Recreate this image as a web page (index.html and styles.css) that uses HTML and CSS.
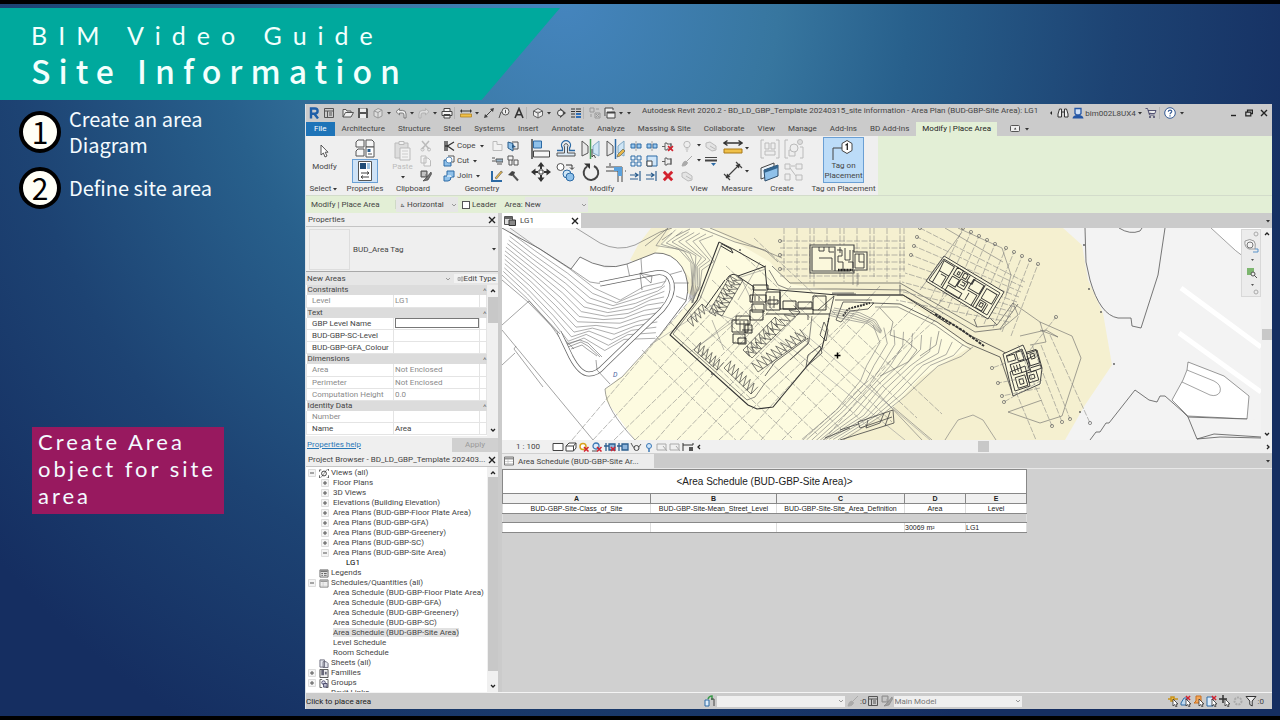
FILE: index.html
```html
<!DOCTYPE html>
<html lang="en">
<head>
    <meta charset="UTF-8">
    <meta name="viewport" content="width=device-width, initial-scale=1.0">
    <title>BIM Video Guide - Site Information</title>
    <link rel="stylesheet" href="styles.css">
</head>
<body>
    <!-- Icon sprite -->
    <svg class="sprite" aria-hidden="true">
        <symbol id="i-caret" viewBox="0 0 8 8"><path d="M2 3h4L4 5.500z" fill="#333"/></symbol>
        <symbol id="i-chev" viewBox="0 0 8 8"><path d="M2 3l2 2 2-2" fill="none" stroke="#999"/></symbol>
        <symbol id="i-up" viewBox="0 0 8 8"><path d="M2 5l2-2 2 2" fill="none" stroke="#222" stroke-width="1.300"/></symbol>
        <symbol id="i-down" viewBox="0 0 8 8"><path d="M2 3l2 2 2-2" fill="none" stroke="#222" stroke-width="1.300"/></symbol>
        <symbol id="i-left" viewBox="0 0 8 8"><path d="M5 2L3 4l2 2" fill="none" stroke="#222" stroke-width="1.300"/></symbol>
        <symbol id="i-right" viewBox="0 0 8 8"><path d="M3 2l2 2-2 2" fill="none" stroke="#222" stroke-width="1.300"/></symbol>
        <symbol id="i-back" viewBox="0 0 8 8"><path d="M5 2v4L3 4z" fill="#222"/></symbol>
        <symbol id="i-x" viewBox="0 0 8 8"><path d="M1 1l6 6M7 1L1 7" stroke="#222" stroke-width="1.400"/></symbol>
        <symbol id="i-redx" viewBox="0 0 10 10"><path d="M1.500 1.500l7 7M8.500 1.500l-7 7" stroke="#d3232f" stroke-width="2.400"/></symbol>
        <symbol id="i-revit" viewBox="0 0 12 12"><path d="M3 11.500V1.500h4a2.600 2.600 0 0 1 0 5.200H4M6.500 7L10 11.500" fill="none" stroke="#1f5fa8" stroke-width="2.400"/></symbol>
        <symbol id="i-home" viewBox="0 0 12 12"><path d="M1.500 1.500h9v9h-9zM1.500 4h9M4.500 4v6.500M6 6h3M6 8h3" fill="none" stroke="#555"/></symbol>
        <symbol id="i-open" viewBox="0 0 12 12"><path d="M1 10V2.500h3l1 1.500h4v1.500M1 10l2.500-4.500H11.500L9 10z" fill="#eee" stroke="#555"/></symbol>
        <symbol id="i-save" viewBox="0 0 12 12"><path d="M1 1h9l1 1v9H1z" fill="#555"/><path d="M3 1.500h6v3.500H3zM3 7h6v4H3z" fill="#eee"/></symbol>
        <symbol id="i-sync" viewBox="0 0 12 12"><path d="M2 4l4-2.500L10 3v6l-4 2-4-2zM2 4l4 1.500V11M6 5.500L10 3" fill="#ddd" stroke="#999"/></symbol>
        <symbol id="i-undo" viewBox="0 0 12 12"><path d="M4.500 1.500L1 4.700l3.500 3.200V6h2.700q1.800 0 1.800 2v3h2V7q0-3.600-3.500-3.600h-3z" fill="#eee" stroke="#666" stroke-width=".8"/></symbol>
        <symbol id="i-redo" viewBox="0 0 12 12"><path d="M7.500 1.500L11 4.700 7.500 7.900V6H4.800Q3 6 3 8v3H1V7q0-3.600 3.500-3.600h3z" fill="#ddd" stroke="#aaa" stroke-width=".8"/></symbol>
        <symbol id="i-print" viewBox="0 0 12 12"><path d="M3 4.500V1.500h6v3M1 4.500h10v4H1zM3 7.500h6v3.500H3z" fill="#f4f4f4" stroke="#444"/></symbol>
        <symbol id="i-rule" viewBox="0 0 12 12"><path d="M0 4h12M1.500 2.500v3M10.500 2.500v3" stroke="#333"/><path d="M.5 7h11v3H.5z" fill="#f0c14a" stroke="#a97916" stroke-width=".7"/></symbol>
        <symbol id="i-dim" viewBox="0 0 12 12"><path d="M2 10L10 2" stroke="#444"/><path d="M1 11l1-4 3 3zM11 1l-1 4-3-3z" fill="#444"/></symbol>
        <symbol id="i-tag" viewBox="0 0 12 12"><path d="M1 11l2-6h3" fill="none" stroke="#555"/><circle cx="7.500" cy="4.500" r="3.500" fill="#eee" stroke="#555"/><path d="M7.500 2.800v3.400" stroke="#555"/></symbol>
        <symbol id="i-letter" viewBox="0 0 12 12"><path d="M2 11L6 1.500 10 11M3.500 7.800h5" fill="none" stroke="#333" stroke-width="1.600"/></symbol>
        <symbol id="i-cube" viewBox="0 0 12 12"><path d="M1.500 4L6 1.500 10.500 4v4.500L6 11 1.500 8.500zM1.500 4L6 6.200 10.500 4M6 6.200V11" fill="#eee" stroke="#555" stroke-width=".9"/></symbol>
        <symbol id="i-sect" viewBox="0 0 12 12"><path d="M5 1l6 5-6 5z" fill="#444"/><circle cx="5.500" cy="6" r="3" fill="#eee" stroke="#444"/></symbol>
        <symbol id="i-thin" viewBox="0 0 12 12"><path d="M1 2h4M1 4.500h4M1 7h4M1 10h4" stroke="#333"/><path d="M6 2h5M6 4.500h5" stroke="#333"/><path d="M6 7h5M6 10h5" stroke="#2f6db5" stroke-width="2"/></symbol>
        <symbol id="i-closew" viewBox="0 0 12 12"><path d="M1 1h4v4H1zM6 6h5v5H6zM7 2h3M2 7v3" fill="none" stroke="#999"/><path d="M7 7l3 3m0-3l-3 3" stroke="#999"/></symbol>
        <symbol id="i-switch" viewBox="0 0 12 12"><path d="M1 9V1h8v2M3 5h8v6H3z" fill="#eee" stroke="#444"/><path d="M3 5h8v1.500H3z" fill="#444"/></symbol>
        <symbol id="i-binoc" viewBox="0 0 12 12"><path d="M1 7l1.500-5h2v8H1zM11 7L9.500 2h-2v8H11zM4.500 5h3" fill="#eee" stroke="#333"/></symbol>
        <symbol id="i-user" viewBox="0 0 12 12"><path d="M3 1.500h6v5L7.500 8h-3L3 6.500z" fill="#cfe0f7" stroke="#2456a5" stroke-width="1.300"/><path d="M.5 11.500c.5-3 3-3.500 5.500-3.500s5 .5 5.500 3.500z" fill="#2456a5"/></symbol>
        <symbol id="i-cart" viewBox="0 0 12 12"><path d="M.5 1.500h2l2 6.500h5M3 3.500h8L9.800 6.500H4" fill="#eee" stroke="#446" stroke-width=".9"/><circle cx="5" cy="10" r="1" fill="#446"/><circle cx="9" cy="10" r="1" fill="#446"/></symbol>
        <symbol id="i-help" viewBox="0 0 12 12"><circle cx="6" cy="6" r="5.300" fill="#fff" stroke="#345a94"/><path d="M4.300 4.700C4.500 2.500 8 2.700 7.700 4.700 7.500 5.800 6 5.800 6 7.300M6 8.300v1.300" fill="none" stroke="#345a94" stroke-width="1.200"/></symbol>
        <symbol id="i-min" viewBox="0 0 8 8"><path d="M1 6.500h5" stroke="#222" stroke-width="1.400"/></symbol>
        <symbol id="i-rest" viewBox="0 0 8 8"><path d="M2.500 3V1.200h5v3.500H6M.8 3.200h5v3.600h-5z" fill="none" stroke="#222" stroke-width="1.200"/></symbol>
        <symbol id="i-panel" viewBox="0 0 12 8"><rect x=".5" y=".5" width="9" height="6" rx="1" fill="#eee" stroke="#555"/><path d="M4 4.500l1.200-2 1.200 2z" fill="#333"/></symbol>

        <symbol id="i-cursor" viewBox="0 0 20 20"><path d="M7 4v10l2.400-2L11 16l2-1-1.800-3.800H14z" fill="#fff" stroke="#444" stroke-width=".9"/></symbol>
        <symbol id="i-types" viewBox="0 0 20 20"><path d="M3 2h6v7H1V4zM11 2h6l2 2v5h-8zM3 11h6v7H1v-5z" fill="#f6f6f6" stroke="#555"/><path d="M11 9h8v10h-8z" fill="#fff" stroke="#555"/><path d="M12.500 11h3v3h-3z" fill="#2b5d8c"/><path d="M13 16h4" stroke="#555"/></symbol>
        <symbol id="i-props" viewBox="0 0 20 20"><path d="M3.500.5h13v19h-13z" fill="#fff" stroke="#555"/><path d="M5 2h6v6H5z" fill="#1f4c77"/><path d="M12 2h3v6h-3z" fill="#9cc3e2"/><path d="M6 12h8M12 10.500l2 1.500-2 1.500M14 16H6M8 14.500L6 16l2 1.500" fill="none" stroke="#444"/></symbol>
        <symbol id="i-paste" viewBox="0 0 20 20"><path d="M2 2h13v15H2z" fill="#ddd" stroke="#bbb"/><path d="M6 .5h5v3H6zM7 7h10v12H7z" fill="#f2f2f2" stroke="#bbb"/><path d="M9 10h6M9 13h6M9 16h6" stroke="#ccc"/></symbol>
        <symbol id="i-cutg" viewBox="0 0 12 12"><path d="M2 1l7 8M9 1L2 9" stroke="#bbb" stroke-width="1.500"/><circle cx="2.500" cy="9.500" r="1.500" fill="none" stroke="#bbb"/><circle cx="9" cy="9.500" r="1.500" fill="none" stroke="#bbb"/></symbol>
        <symbol id="i-copyg" viewBox="0 0 12 12"><path d="M1 1h5v7H1zM4 3h4l2.500 2.500V11H4z" fill="#f4f4f4" stroke="#bbb"/></symbol>
        <symbol id="i-match" viewBox="0 0 12 12"><path d="M1 1h6v6H1z" fill="#999" stroke="#555"/><path d="M2 3h4M2 5h3" stroke="#eee"/><path d="M11 2L6 8l-3 3 5-1 3.500-6z" fill="#777" stroke="#333" stroke-width=".6"/></symbol>
        <symbol id="i-cope" viewBox="0 0 12 12"><path d="M2 1v10M4 1v10M11 2L4.500 6 11 10.500M2 6h3" fill="none" stroke="#333" stroke-width="1.300"/></symbol>
        <symbol id="i-cut" viewBox="0 0 12 12"><path d="M5 1h6v6H8" fill="#fff" stroke="#555"/><path d="M1 5h4q0 3 3 3v3H1z" fill="#8fc1ea" stroke="#2c6aa5"/><circle cx="6" cy="5" r="3" fill="#fff" stroke="#2c6aa5" stroke-width=".7"/></symbol>
        <symbol id="i-join" viewBox="0 0 12 12"><path d="M4 1h7v6H8q0 4-3 4H1V6h3z" fill="#8fc1ea" stroke="#2c6aa5"/><path d="M4 6h4v1" fill="none" stroke="#fff"/></symbol>
        <symbol id="i-wallj" viewBox="0 0 12 12"><path d="M2 1.500h4v3h5v6H2z" fill="#f2f2f2" stroke="#bbb"/></symbol>
        <symbol id="i-face" viewBox="0 0 12 12"><path d="M1 2l5 1.500V11L1 8z" fill="#8fc1ea" stroke="#2c5c88"/><path d="M5 2h6v7H6" fill="none" stroke="#555"/><path d="M5 4l4 3-4 1z" fill="#2c5c88"/></symbol>
        <symbol id="i-beam" viewBox="0 0 12 12"><path d="M1 3h3M1 6h3M5 4h7v3H5z" fill="#9db8cc" stroke="#555"/><path d="M6 9h5" stroke="#555"/></symbol>
        <symbol id="i-uncut" viewBox="0 0 12 12"><path d="M1 1h5v4H1zM2 5v5h3V5M7 5h4v5H7z" fill="#f4f4f4" stroke="#555"/></symbol>
        <symbol id="i-paint" viewBox="0 0 12 12"><path d="M1 1v10h10" fill="none" stroke="#2c6aa5" stroke-width="2"/><path d="M4 8l6-7 1.500 1L5.500 9z" fill="#e8b84b" stroke="#555" stroke-width=".6"/></symbol>
        <symbol id="i-demo" viewBox="0 0 12 12"><path d="M1 5l4-4 3 1-1 3-2 1z" fill="#444"/><path d="M6 5l5 5.500" stroke="#555" stroke-width="2"/></symbol>
        <symbol id="i-align" viewBox="0 0 20 20"><path d="M1 0v20" stroke="#444" stroke-width="1.500"/><path d="M2.500 2h8v7h-8z" fill="#8fc1ea" stroke="#2c6aa5"/><path d="M2.500 12h16v6h-16z" fill="#f6f6f6" stroke="#444"/></symbol>
        <symbol id="i-offset" viewBox="0 0 20 20"><path d="M1 11.500h5.500V9a4.500 4.500 0 1 1 7 0v2.500H19" fill="none" stroke="#2c6aa5" stroke-width="1.300"/><path d="M1 17h18V14H11.500V8a2 2 0 1 0-3 0v6H1z" fill="#dbe9f5" stroke="#555"/></symbol>
        <symbol id="i-mirp" viewBox="0 0 20 20"><path d="M1 2v15l6-3V7z" fill="#e8e8e8" stroke="#555"/><path d="M18 2v15l-6-3V7z" fill="#cfe5f5" stroke="#7fa8c4"/><path d="M9.500 0v20" stroke="#4ba15a" stroke-width="1.500"/><path d="M11 10v8l2-2 1.500 3" fill="none" stroke="#444"/></symbol>
        <symbol id="i-mird" viewBox="0 0 20 20"><path d="M1 2v15l6-3V7z" fill="#e8e8e8" stroke="#555"/><path d="M18 2v15l-6-3V7z" fill="#cfe5f5" stroke="#7fa8c4"/><path d="M9.500 0v20" stroke="#2c6aa5" stroke-width="1.500"/><path d="M11 18l1-3 5-5 2 2-5 5z" fill="#e8b84b" stroke="#665" stroke-width=".7"/></symbol>
        <symbol id="i-move" viewBox="0 0 20 20"><path d="M10 0l3.500 4.500h-7zM10 20l3.500-4.500h-7zM0 10l4.500-3.500v7zM20 10l-4.500-3.500v7z" fill="#333"/><path d="M10 4v3M10 13v3M4 10h3M13 10h3" stroke="#333" stroke-width="2"/><path d="M8 8h4v4H8z" fill="#fff" stroke="#333"/></symbol>
        <symbol id="i-copy" viewBox="0 0 20 20"><circle cx="4.500" cy="5" r="3.500" fill="#fff" stroke="#555"/><path d="M10 3h6v4M14 5.500l2 2 2-2" fill="none" stroke="#333"/><circle cx="11" cy="12" r="4" fill="#cfe5f5" stroke="#2c6aa5"/><circle cx="14" cy="15" r="4" fill="#8fc1ea" stroke="#2c6aa5"/></symbol>
        <symbol id="i-rot" viewBox="0 0 20 20"><path d="M6 4.500A7.300 7.300 0 1 0 13 4" fill="none" stroke="#444" stroke-width="2"/><path d="M3 1.500h6v5.500z" fill="#333"/></symbol>
        <symbol id="i-trim" viewBox="0 0 20 20"><path d="M0 5h16v15M0 9h12v11" fill="none" stroke="#444"/><path d="M8 5h8v9h-4V9H8z" fill="#5aa1dc"/><path d="M4 1v3M19 9h1" stroke="#444"/></symbol>
        <symbol id="i-split" viewBox="0 0 12 12"><path d="M1 4h4v4H1zM7 4h4v4H7z" fill="#9ccaf0" stroke="#2c6aa5"/><path d="M6 1v10" stroke="#777" stroke-width=".6"/></symbol>
        <symbol id="i-array" viewBox="0 0 12 12"><path d="M1 1h4v4H1zM7 1h4v4H7zM1 7h4v4H1zM7 7h4v4H7z" fill="#e8f2fb" stroke="#2c6aa5"/></symbol>
        <symbol id="i-scale" viewBox="0 0 12 12"><path d="M1 1h10v10H1z" fill="#cfe5f8" stroke="#2c6aa5"/><path d="M1 6h5v5H1z" fill="#fff" stroke="#444"/></symbol>
        <symbol id="i-ext" viewBox="0 0 12 12"><path d="M0 5h8M0 9h8M5 3l3 2-3 2M10 1v10" fill="none" stroke="#2d5f8f" stroke-width="1.200"/></symbol>
        <symbol id="i-pin" viewBox="0 0 12 12"><path d="M3 3h2v1h4v5H5v1H3zM0 6.500h3M9 3v7" fill="#eee" stroke="#555" stroke-width=".9"/></symbol>
        <symbol id="i-bulb" viewBox="0 0 12 12"><circle cx="6" cy="4.500" r="3.200" fill="#eee" stroke="#bbb"/><path d="M4.500 9h3M5 11h2" stroke="#bbb"/></symbol>
        <symbol id="i-brush" viewBox="0 0 12 12"><path d="M11 1L5 7M5 6q-3 0-4 5 5 0 5.500-3.500z" fill="#aaa" stroke="#aaa"/></symbol>
        <symbol id="i-boxg" viewBox="0 0 12 12"><path d="M1 3l4-1 6 4v4l-4 1-6-4zM5 6l5 3" fill="#e4e4e4" stroke="#bbb"/></symbol>
        <symbol id="i-lw" viewBox="0 0 12 12"><path d="M0 2.500h12" stroke="#444"/><path d="M0 5.500h12" stroke="#444" stroke-width="2"/><path d="M6 8h5L8.500 11z" fill="#2c6aa5"/></symbol>
        <symbol id="i-meas" viewBox="0 0 20 20"><path d="M1 5h18M4.500 2.500L1 5l3.500 2.500M15.500 2.500L19 5l-3.500 2.500" fill="none" stroke="#333" stroke-width="1.400"/><path d="M1 11h18v4H1z" fill="#f0c14a" stroke="#a97916"/></symbol>
        <symbol id="i-adim" viewBox="0 0 20 20"><path d="M3 17L17 3M1 13l6 6M13 1l6 6" fill="none" stroke="#444" stroke-width="1.200"/><path d="M3 17l1-4.500L7.500 16zM17 3l-1 4.500L12.500 4z" fill="#333"/></symbol>
        <symbol id="i-asm" viewBox="0 0 20 20"><path d="M4 1H1v18h3M16 1h3v18h-3" fill="none" stroke="#bbb"/><path d="M5 4h4v6H5zM11 4h4v6h-4zM5 12h10v4H5z" fill="#eee" stroke="#bbb"/></symbol>
        <symbol id="i-grp" viewBox="0 0 20 20"><path d="M4 1H1v18h3M16 8h3v11h-3" fill="none" stroke="#bbb"/><path d="M5 11h6v6H5z" fill="#eee" stroke="#bbb"/><circle cx="10" cy="9" r="4" fill="#eee" stroke="#bbb"/><circle cx="16" cy="3" r="2.500" fill="#ddd" stroke="#bbb"/></symbol>
        <symbol id="i-wins" viewBox="0 0 20 20"><path d="M1 6l13-5v11L1 17z" fill="#eef6fc" stroke="#444"/><path d="M4 8l14-5v11L5 19z" fill="#8fc1ea" stroke="#2c4c6a"/><path d="M4 8l14-5v3L4 11z" fill="#33658f"/></symbol>
        <symbol id="i-parts" viewBox="0 0 20 20"><path d="M1 2h5v5H1zM12 2h6v5h-6zM1 12h5v6H1zM12 13h6v5h-6zM6 6l6 8M7 4h4" fill="#eee" stroke="#bbb"/></symbol>
        <symbol id="i-bigtag" viewBox="0 0 28 22"><path d="M3 21V9h9" fill="none" stroke="#444"/><path d="M12 4.500L17 1.500l5 3v7l-5 3-5-3z" fill="#fff" stroke="#444"/><path d="M15.500 6.200L17.300 5v6" fill="none" stroke="#222" stroke-width="1.300"/></symbol>

        <symbol id="i-sheet" viewBox="0 0 10 10"><path d="M.5 1h9v8h-9z" fill="#fff" stroke="#777"/><path d="M1 1.500h8v2H1z" fill="#999"/><path d="M1 5.500h8M1 7.500h8M4 3v6" stroke="#bbb" stroke-width=".6"/></symbol>
        <symbol id="i-legend" viewBox="0 0 10 10"><path d="M.5 1h9v8h-9z" fill="#eee" stroke="#666"/><path d="M1 1.500h8v2H1z" fill="#777"/><path d="M2 5h2M2 7h2M5 5h3M5 7h3" stroke="#555"/></symbol>
        <symbol id="i-sheets" viewBox="0 0 10 10"><path d="M.5 1h5v8h-5zM4 3h3.500L9.500 5v4.500H4z" fill="#e4e6ee" stroke="#667"/></symbol>
        <symbol id="i-etype" viewBox="0 0 8 8"><path d="M2 2.500h2v3H2zM5 2h2v4H5z" fill="#ddd" stroke="#999" stroke-width=".7"/></symbol>
        <symbol id="i-plan" viewBox="0 0 12 10"><path d="M.5.500h8v8h-8z" fill="#ddd" stroke="#555"/><path d="M1 1h7v2H1z" fill="#666"/><path d="M5 4h6.500v5.500H5z" fill="#888" stroke="#333"/></symbol>
        <symbol id="i-views" viewBox="0 0 10 10"><path d="M0 3V1h2M8 0h2v2M0 7v3h2M10 7v3H8" fill="none" stroke="#555"/><circle cx="5" cy="5" r="2.700" fill="none" stroke="#333"/><path d="M2 9l6-8" stroke="#333" stroke-width=".6"/></symbol>
        <symbol id="i-groups" viewBox="0 0 10 10"><path d="M3 .5H.5v9H3M7 .5h2.500v9H7" fill="none" stroke="#555"/><circle cx="4.500" cy="4" r="2" fill="#dde" stroke="#446"/><path d="M4.500 5h4v4h-4z" fill="#bbc" stroke="#446"/></symbol>
        <symbol id="i-plus" viewBox="0 0 8 8"><path d="M.5.500h7v7h-7z" fill="#f4f4f4" stroke="#ddd"/><path d="M2 4h4M4 2v4" stroke="#555"/></symbol>
        <symbol id="i-minus" viewBox="0 0 8 8"><path d="M.5.500h7v7h-7z" fill="#f4f4f4" stroke="#ddd"/><path d="M2 4h4" stroke="#555"/></symbol>
        <symbol id="i-fam" viewBox="0 0 10 10"><path d="M.5.500h9v9h-9z" fill="#eee" stroke="#444"/><path d="M2 1v6h3V1zM6 3h2v3H6z" fill="#667"/></symbol>

        <symbol id="v-rect" viewBox="0 0 12 10"><path d="M1 1.500h10v7H1z" fill="#fff" stroke="#444"/></symbol>
        <symbol id="v-box" viewBox="0 0 12 10"><path d="M1 4l3-3h7v5L8.500 9H1zM1 4h7.500v5M8.500 4L11 1" fill="#fff" stroke="#444"/></symbol>
        <symbol id="v-sun" viewBox="0 0 12 10"><circle cx="5" cy="4.500" r="3" fill="#fff" stroke="#d8a21e" stroke-width="1.500"/><path d="M6 5l4.500 4.500M10.500 5L6 9.500" stroke="#d3232f" stroke-width="1.500"/></symbol>
        <symbol id="v-shade" viewBox="0 0 12 10"><circle cx="5" cy="4" r="3" fill="#dcecfb" stroke="#3c78b4" stroke-width="1.300"/><path d="M1 9h5" stroke="#555"/><path d="M6 5l4.500 4.500M10.500 5L6 9.500" stroke="#d3232f" stroke-width="1.500"/></symbol>
        <symbol id="v-crop" viewBox="0 0 12 10"><path d="M0 4h5M2 1v8M5 2h6v6H5z" fill="#8fb6dc" stroke="#2d5f8f" stroke-width="1.300"/></symbol>
        <symbol id="v-glass" viewBox="0 0 12 10"><path d="M1 1q2 5 4 5M11 2L8 6" fill="none" stroke="#555"/><circle cx="6.500" cy="6" r="2.500" fill="#eee" stroke="#444"/></symbol>
        <symbol id="v-bulb" viewBox="0 0 12 10"><circle cx="6" cy="4" r="2.500" fill="#cfe6fb" stroke="#3c78b4"/><path d="M6 6.500V10" stroke="#3c78b4" stroke-width="1.500"/></symbol>
        <symbol id="v-gray" viewBox="0 0 12 10"><path d="M1 2h9v6H1zM7 4l4 5" fill="none" stroke="#aaa"/></symbol>
        <symbol id="v-cons" viewBox="0 0 12 10"><path d="M1 1v8M1 3h10M11 1v2" fill="none" stroke="#333"/><path d="M7 5h4v4H7z" fill="#555"/></symbol>

        <symbol id="s-door" viewBox="0 0 12 12"><path d="M1 5h4v6H1z" fill="#dcecfb" stroke="#2c6aa5"/><path d="M4 4q1-3 4-3v4" fill="none" stroke="#3a9a4a" stroke-width="1.500"/><path d="M7 4h3v7" fill="none" stroke="#444"/></symbol>
        <symbol id="s-cur" viewBox="0 0 12 12"><path d="M6 4v7l1.600-1.500L9 12l1-.6L9 9h2z" fill="#fff" stroke="#333" stroke-width=".8"/></symbol>
        <symbol id="s-funnel" viewBox="0 0 12 12"><path d="M1 1.500h10L7.200 6v5L4.800 9.500V6z" fill="#eee" stroke="#333"/></symbol>
        <symbol id="s-gear" viewBox="0 0 12 12"><circle cx="6" cy="6" r="3.500" fill="none" stroke="#aaa" stroke-width="2" stroke-dasharray="2 1"/></symbol>
    </svg>

    <header class="banner">
        <p class="series">BIM Video Guide</p>
        <h1 class="title">Site Information</h1>
    </header>

    <main class="stage">
        <aside class="guide">
            <ol class="steps">
                <li><span class="num">1</span><span>Create an area Diagram</span></li>
                <li><span class="num">2</span><span>Define site area</span></li>
            </ol>
            <p class="callout">Create Area object for site area</p>
        </aside>

        <section class="revit">
            <div class="titlebar">
                <div class="qat">
                    <button class="tool"><svg><use href="#i-revit"/></svg></button>
                    <button class="tool"><svg><use href="#i-home"/></svg></button>
                    <span class="gap"></span>
                    <button class="tool"><svg><use href="#i-open"/></svg></button>
                    <button class="tool"><svg><use href="#i-save"/></svg></button>
                    <button class="tool"><svg><use href="#i-sync"/></svg></button>
                    <svg class="tiny"><use href="#i-caret"/></svg>
                    <button class="tool"><svg><use href="#i-undo"/></svg></button>
                    <svg class="tiny"><use href="#i-caret"/></svg>
                    <button class="tool"><svg><use href="#i-redo"/></svg></button>
                    <svg class="tiny"><use href="#i-caret"/></svg>
                    <button class="tool"><svg><use href="#i-print"/></svg></button>
                    <span class="gap line"></span>
                    <button class="tool"><svg><use href="#i-rule"/></svg></button>
                    <svg class="tiny"><use href="#i-caret"/></svg>
                    <button class="tool"><svg><use href="#i-dim"/></svg></button>
                    <button class="tool"><svg><use href="#i-tag"/></svg></button>
                    <button class="tool"><svg><use href="#i-letter"/></svg></button>
                    <span class="gap line"></span>
                    <button class="tool"><svg><use href="#i-cube"/></svg></button>
                    <svg class="tiny"><use href="#i-caret"/></svg>
                    <button class="tool"><svg><use href="#i-sect"/></svg></button>
                    <button class="tool"><svg><use href="#i-thin"/></svg></button>
                    <span class="gap line"></span>
                    <button class="tool"><svg><use href="#i-closew"/></svg></button>
                    <button class="tool"><svg><use href="#i-switch"/></svg></button>
                    <svg class="tiny"><use href="#i-caret"/></svg>
                    <svg class="tiny"><use href="#i-caret"/></svg>
                </div>
                <span class="doc-title">Autodesk Revit 2020.2 - BD_LD_GBP_Template 20240315_site information - Area Plan (BUD-GBP-Site Area): LG1</span>
                <div class="account">
                    <svg class="tiny"><use href="#i-back"/></svg>
                    <button class="tool"><svg><use href="#i-binoc"/></svg></button>
                    <button class="tool"><svg><use href="#i-user"/></svg></button>
                    <span>bim002L8UX4</span>
                    <svg class="tiny"><use href="#i-caret"/></svg>
                    <button class="tool"><svg><use href="#i-cart"/></svg></button>
                    <span class="gap line"></span>
                    <button class="tool"><svg><use href="#i-help"/></svg></button>
                    <svg class="tiny"><use href="#i-caret"/></svg>
                </div>
                <div class="win-buttons">
                    <button><svg class="tiny"><use href="#i-min"/></svg></button>
                    <button><svg class="tiny"><use href="#i-rest"/></svg></button>
                    <button><svg class="tiny"><use href="#i-x"/></svg></button>
                </div>
            </div>

            <nav class="tabs">
                <a class="file" href="#">File</a>
                <a href="#">Architecture</a>
                <a href="#">Structure</a>
                <a href="#">Steel</a>
                <a href="#">Systems</a>
                <a href="#">Insert</a>
                <a href="#">Annotate</a>
                <a href="#">Analyze</a>
                <a href="#">Massing &amp; Site</a>
                <a href="#">Collaborate</a>
                <a href="#">View</a>
                <a href="#">Manage</a>
                <a href="#">Add-Ins</a>
                <a href="#">BD Add-Ins</a>
                <a class="active" href="#">Modify | Place Area</a>
                <svg class="panel-toggle"><use href="#i-panel"/></svg>
                <svg class="tiny"><use href="#i-caret"/></svg>
            </nav>

            <div class="ribbon">
                <div class="group g-select">
                    <div class="tools"><button class="big"><svg class="ic20"><use href="#i-cursor"/></svg>Modify</button></div>
                    <span class="label">Select <svg class="tiny"><use href="#i-caret"/></svg></span>
                </div>
                <div class="group g-props">
                    <div class="tools stack">
                        <button><svg class="ic20"><use href="#i-types"/></svg></button>
                        <button class="on"><svg class="ic20"><use href="#i-props"/></svg></button>
                    </div>
                    <span class="label">Properties</span>
                </div>
                <div class="group g-clip">
                    <div class="tools">
                        <button class="big off"><svg class="ic20"><use href="#i-paste"/></svg>Paste<svg class="tiny"><use href="#i-caret"/></svg></button>
                        <div class="small-col">
                            <button><svg><use href="#i-cutg"/></svg></button>
                            <button><svg><use href="#i-copyg"/></svg></button>
                            <button><svg><use href="#i-match"/></svg></button>
                        </div>
                    </div>
                    <span class="label">Clipboard</span>
                </div>
                <div class="group g-geo">
                    <div class="tools">
                        <div class="small-col named">
                            <button><svg><use href="#i-cope"/></svg>Cope<svg class="tiny"><use href="#i-caret"/></svg></button>
                            <button><svg><use href="#i-cut"/></svg>Cut<svg class="tiny"><use href="#i-caret"/></svg></button>
                            <button><svg><use href="#i-join"/></svg>Join<svg class="tiny"><use href="#i-caret"/></svg></button>
                        </div>
                        <div class="small-col">
                            <button><svg><use href="#i-wallj"/></svg></button>
                            <button><svg><use href="#i-beam"/></svg></button>
                            <button><svg><use href="#i-paint"/></svg></button>
                        </div>
                        <div class="small-col">
                            <button><svg><use href="#i-face"/></svg></button>
                            <button><svg><use href="#i-uncut"/></svg></button>
                            <button><svg><use href="#i-demo"/></svg></button>
                        </div>
                    </div>
                    <span class="label">Geometry</span>
                </div>
                <div class="group g-modify">
                    <div class="tools">
                        <div class="grid-big">
                            <button><svg class="ic20"><use href="#i-align"/></svg></button>
                            <button><svg class="ic20"><use href="#i-offset"/></svg></button>
                            <button><svg class="ic20"><use href="#i-mirp"/></svg></button>
                            <button><svg class="ic20"><use href="#i-mird"/></svg></button>
                            <button><svg class="ic20"><use href="#i-move"/></svg></button>
                            <button><svg class="ic20"><use href="#i-copy"/></svg></button>
                            <button><svg class="ic20"><use href="#i-rot"/></svg></button>
                            <button><svg class="ic20"><use href="#i-trim"/></svg></button>
                        </div>
                        <div class="small-col">
                            <button><svg><use href="#i-split"/></svg></button>
                            <button><svg><use href="#i-array"/></svg></button>
                            <button><svg><use href="#i-ext"/></svg></button>
                        </div>
                        <div class="small-col">
                            <button><svg><use href="#i-split"/></svg></button>
                            <button><svg><use href="#i-scale"/></svg></button>
                            <button><svg><use href="#i-ext"/></svg></button>
                        </div>
                        <div class="small-col">
                            <button><svg viewBox="0 0 12 12"><use href="#i-pin" width="12" height="12"/><use href="#i-redx" x="5" y="5" width="7" height="7"/></svg></button>
                            <button><svg><use href="#i-pin"/></svg></button>
                            <button><svg><use href="#i-redx"/></svg></button>
                        </div>
                    </div>
                    <span class="label">Modify</span>
                </div>
                <div class="group g-view">
                    <div class="tools">
                        <div class="small-col">
                            <button><svg><use href="#i-bulb"/></svg></button>
                            <button><svg><use href="#i-brush"/></svg></button>
                            <button><svg><use href="#i-boxg"/></svg></button>
                        </div>
                        <div class="small-col carets">
                            <svg class="tiny"><use href="#i-caret"/></svg>
                            <svg class="tiny"><use href="#i-caret"/></svg>
                        </div>
                        <div class="small-col">
                            <button><svg><use href="#i-boxg"/></svg></button>
                            <button><svg><use href="#i-lw"/></svg></button>
                        </div>
                    </div>
                    <span class="label">View</span>
                </div>
                <div class="group g-measure">
                    <div class="tools stack">
                        <button><svg class="ic20"><use href="#i-meas"/></svg><svg class="tiny"><use href="#i-caret"/></svg></button>
                        <button><svg class="ic20"><use href="#i-adim"/></svg><svg class="tiny"><use href="#i-caret"/></svg></button>
                    </div>
                    <span class="label">Measure</span>
                </div>
                <div class="group g-create">
                    <div class="tools">
                        <div class="grid-big two">
                            <button><svg class="ic20"><use href="#i-asm"/></svg></button>
                            <button><svg class="ic20"><use href="#i-grp"/></svg></button>
                            <button><svg class="ic20"><use href="#i-wins"/></svg></button>
                            <button><svg class="ic20"><use href="#i-parts"/></svg></button>
                        </div>
                    </div>
                    <span class="label">Create</span>
                </div>
                <div class="group g-tag">
                    <div class="tools"><button class="tag-on"><svg><use href="#i-bigtag"/></svg>Tag on Placement</button></div>
                    <span class="label">Tag on Placement</span>
                </div>
            </div>

            <div class="options">
                <span class="context">Modify | Place Area</span>
                <span class="drop orient">
                    <i>⊾</i>
                    <select aria-label="Orientation"><option>Horizontal</option></select>
                    <svg class="tiny"><use href="#i-chev"/></svg>
                </span>
                <input type="checkbox" id="leader"><label for="leader">Leader</label>
                <label class="area-label" for="area">Area:</label>
                <span class="drop area">
                    <select id="area"><option>New</option></select>
                    <svg class="tiny"><use href="#i-chev"/></svg>
                </span>
            </div>

            <div class="workspace">
                <div class="docks">
                    <section class="properties">
                        <h2 class="dock-title">Properties<button><svg class="tiny"><use href="#i-x"/></svg></button></h2>
                        <div class="type">
                            <span class="thumb"></span>
                            <span>BUD_Area Tag</span>
                            <svg class="tiny"><use href="#i-caret"/></svg>
                        </div>
                        <div class="filter">
                            <span>New Areas</span>
                            <svg class="tiny"><use href="#i-chev"/></svg>
                            <button><svg class="tiny"><use href="#i-etype"/></svg>Edit Type</button>
                        </div>
                        <div class="scroller">
                            <table class="params">
                                <colgroup><col class="p-name"><col><col class="p-btn"></colgroup>
                                <tr class="head"><th colspan="3">Constraints<i>˄</i></th></tr>
                                <tr class="dim"><td>Level</td><td>LG1</td><td></td></tr>
                                <tr class="head"><th colspan="3">Text<i>˄</i></th></tr>
                                <tr><td>GBP Level Name</td><td><input type="text" aria-label="GBP Level Name"></td><td></td></tr>
                                <tr><td>BUD-GBP-SC-Level</td><td></td><td></td></tr>
                                <tr><td>BUD-GBP-GFA_Colour</td><td></td><td></td></tr>
                                <tr class="head"><th colspan="3">Dimensions<i>˄</i></th></tr>
                                <tr class="dim"><td>Area</td><td>Not Enclosed</td><td></td></tr>
                                <tr class="dim"><td>Perimeter</td><td>Not Enclosed</td><td></td></tr>
                                <tr class="dim"><td>Computation Height</td><td>0.0</td><td></td></tr>
                                <tr class="head"><th colspan="3">Identity Data<i>˄</i></th></tr>
                                <tr class="dim"><td>Number</td><td></td><td></td></tr>
                                <tr><td>Name</td><td>Area</td><td></td></tr>
                            </table>
                            <div class="vbar short">
                                <svg class="tiny"><use href="#i-up"/></svg>
                                <span class="thumb-bar"></span>
                                <svg class="tiny end"><use href="#i-down"/></svg>
                            </div>
                        </div>
                        <div class="prop-foot"><a href="#">Properties help</a><button disabled>Apply</button></div>
                    </section>

                    <section class="browser">
                        <h2 class="dock-title"><span>Project Browser - BD_LD_GBP_Template 202403...</span><button><svg class="tiny"><use href="#i-x"/></svg></button></h2>
                        <div class="scroller">
                            <ul class="tree">
                                <li><svg class="tiny"><use href="#i-minus"/></svg><svg class="node"><use href="#i-views"/></svg>Views (all)
                                    <ul>
                                        <li><svg class="tiny"><use href="#i-plus"/></svg>Floor Plans</li>
                                        <li><svg class="tiny"><use href="#i-plus"/></svg>3D Views</li>
                                        <li><svg class="tiny"><use href="#i-plus"/></svg>Elevations (Building Elevation)</li>
                                        <li><svg class="tiny"><use href="#i-plus"/></svg>Area Plans (BUD-GBP-Floor Plate Area)</li>
                                        <li><svg class="tiny"><use href="#i-plus"/></svg>Area Plans (BUD-GBP-GFA)</li>
                                        <li><svg class="tiny"><use href="#i-plus"/></svg>Area Plans (BUD-GBP-Greenery)</li>
                                        <li><svg class="tiny"><use href="#i-plus"/></svg>Area Plans (BUD-GBP-SC)</li>
                                        <li><svg class="tiny"><use href="#i-minus"/></svg>Area Plans (BUD-GBP-Site Area)</li>
                                        <li class="leaf">LG1</li>
                                    </ul>
                                </li>
                                <li><svg class="tiny"></svg><svg class="node"><use href="#i-legend"/></svg>Legends</li>
                                <li><svg class="tiny"><use href="#i-minus"/></svg><svg class="node"><use href="#i-sheet"/></svg>Schedules/Quantities (all)
                                    <ul class="flat">
                                        <li>Area Schedule (BUD-GBP-Floor Plate Area)</li>
                                        <li>Area Schedule (BUD-GBP-GFA)</li>
                                        <li>Area Schedule (BUD-GBP-Greenery)</li>
                                        <li>Area Schedule (BUD-GBP-SC)</li>
                                        <li><mark>Area Schedule (BUD-GBP-Site Area)</mark></li>
                                        <li>Level Schedule</li>
                                        <li>Room Schedule</li>
                                    </ul>
                                </li>
                                <li><svg class="tiny"></svg><svg class="node"><use href="#i-sheets"/></svg>Sheets (all)</li>
                                <li><svg class="tiny"><use href="#i-plus"/></svg><svg class="node"><use href="#i-fam"/></svg>Families</li>
                                <li><svg class="tiny"><use href="#i-plus"/></svg><svg class="node"><use href="#i-groups"/></svg>Groups</li>
                                <li><svg class="tiny"></svg><svg class="node"></svg>Revit Links</li>
                            </ul>
                            <div class="vbar long">
                                <svg class="tiny"><use href="#i-up"/></svg>
                                <span class="thumb-bar"></span>
                                <svg class="tiny end"><use href="#i-down"/></svg>
                            </div>
                        </div>
                    </section>
                </div>

                <div class="views">
                    <div class="view-tabs">
                        <span class="view-tab front"><svg class="node"><use href="#i-plan"/></svg>LG1<button><svg class="tiny"><use href="#i-x"/></svg></button></span>
                        <svg class="tiny more"><use href="#i-caret"/></svg>
                    </div>
                    <div class="plan-row">
                        <div class="plan-wrap">
                            <svg class="plan" id="plan" viewBox="502 228 759 212" preserveAspectRatio="xMinYMin slice"></svg>
                            <div class="navbar">
                                <svg viewBox="0 0 18 66">
                                    <circle cx="14" cy="4" r="2" fill="none" stroke="#aaa"/>
                                    <path d="M3 11q5-3 9 0 2 2 1 8H7q-5-2-4-8z" fill="#f4f4f4" stroke="#999"/>
                                    <circle cx="8" cy="15" r="3" fill="none" stroke="#777"/>
                                    <path d="M11 22h5v-3h-3" fill="none" stroke="#5b93c9"/>
                                    <path d="M9 29h3l-1.500 2zM9 54h3l-1.500 2z" fill="#555"/>
                                    <path d="M5 38h7v7H5z" fill="#7db66f"/>
                                    <circle cx="11" cy="44" r="2" fill="#eee" stroke="#555"/><path d="M12 45l3 3" stroke="#555"/>
                                    <circle cx="14" cy="62" r="2" fill="none" stroke="#aaa"/>
                                </svg>
                            </div>
                        </div>
                        <div class="vbar plan-bar">
                            <svg class="tiny"><use href="#i-up"/></svg>
                            <span class="thumb-bar"></span>
                            <svg class="tiny end"><use href="#i-down"/></svg>
                        </div>
                    </div>
                    <div class="view-controls">
                        <span class="scale">1 : 100</span>
                        <svg><use href="#v-rect"/></svg>
                        <svg><use href="#v-box"/></svg>
                        <svg><use href="#v-sun"/></svg>
                        <svg><use href="#v-shade"/></svg>
                        <svg viewBox="0 0 12 10"><use href="#v-crop" width="12" height="10"/><use href="#i-redx" x="6" y="4" width="6" height="6"/></svg>
                        <svg><use href="#v-crop"/></svg>
                        <svg><use href="#v-glass"/></svg>
                        <svg><use href="#v-bulb"/></svg>
                        <svg><use href="#v-gray"/></svg>
                        <svg><use href="#v-gray"/></svg>
                        <svg><use href="#v-cons"/></svg>
                        <svg class="tiny"><use href="#i-left"/></svg>
                        <span class="hbar"><span class="thumb-bar"></span></span>
                        <svg class="tiny"><use href="#i-right"/></svg>
                    </div>

                    <div class="view-tabs second">
                        <span class="view-tab"><svg class="node"><use href="#i-sheet"/></svg>Area Schedule (BUD-GBP-Site Ar...</span>
                        <svg class="tiny more"><use href="#i-caret"/></svg>
                    </div>
                    <div class="schedule-area">
                        <table class="schedule">
                            <caption>&lt;Area Schedule (BUD-GBP-Site Area)&gt;</caption>
                            <colgroup><col class="c-a"><col class="c-b"><col class="c-c"><col class="c-d"><col class="c-e"></colgroup>
                            <thead>
                                <tr class="letters"><th>A</th><th>B</th><th>C</th><th>D</th><th>E</th></tr>
                                <tr class="names"><th>BUD-GBP-Site-Class_of_Site</th><th>BUD-GBP-Site-Mean_Street_Level</th><th>BUD-GBP-Site-Site_Area_Definition</th><th>Area</th><th>Level</th></tr>
                            </thead>
                            <tbody>
                                <tr class="spacer"><td colspan="5"></td></tr>
                                <tr><td></td><td></td><td></td><td>30069 m²</td><td>LG1</td></tr>
                            </tbody>
                        </table>
                    </div>
                </div>
            </div>

            <footer class="status">
                <span class="hint">Click to place area</span>
                <svg class="s-ic"><use href="#s-door"/></svg>
                <span class="drop workset"><select aria-label="Workset"><option></option></select><svg class="tiny"><use href="#i-chev"/></svg></span>
                <svg class="s-ic"><use href="#i-brush"/></svg>
                <span>:0</span>
                <svg class="s-ic"><use href="#i-home"/></svg>
                <svg class="s-ic faded"><use href="#i-match"/></svg>
                <span class="drop option"><select aria-label="Design option"><option>Main Model</option></select><svg class="tiny"><use href="#i-chev"/></svg></span>
                <span class="select-tools">
                    <svg viewBox="0 0 12 12"><path d="M1 4h3M7 4h4M4 2h3v4H4z" fill="#f0c14a" stroke="#c8921c" stroke-width="1.500"/><use href="#s-cur" width="12" height="12"/></svg>
                    <svg viewBox="0 0 12 12"><path d="M1 8l3-5h3v7H1z" fill="#bcd8f0" stroke="#2c6aa5"/><use href="#i-redx" x="5" width="6" height="6"/><use href="#s-cur" width="12" height="12"/></svg>
                    <svg viewBox="0 0 12 12"><path d="M3 1h5v5l2 2H1l2-2z" fill="#f2a65a" stroke="#c96f1c"/><use href="#s-cur" width="12" height="12"/></svg>
                    <svg viewBox="0 0 12 12"><path d="M1 2h6v9H1z" fill="#dcecfb" stroke="#2c6aa5"/><use href="#i-redx" x="5" width="6" height="6"/><use href="#s-cur" width="12" height="12"/></svg>
                    <svg viewBox="0 0 12 12"><path d="M4 0v8M0 4h8" stroke="#333" stroke-width="1.500"/><use href="#s-cur" width="12" height="12"/></svg>
                    <svg><use href="#s-gear"/></svg>
                    <svg><use href="#s-funnel"/></svg>
                    <span>:0</span>
                </span>
            </footer>
        </section>
    </main>

    <script src="plan.js"></script>
</body>
</html>
```
FILE: styles.css
```css
/* Resetting styles */
* {
    margin: 0;
    padding: 0;
    box-sizing: border-box;
}

body {
    min-height: 100vh;
    display: flex;
    flex-direction: column;
    border-top: 4px solid #000;
    border-bottom: 4px solid #000;
    background: radial-gradient(ellipse 60% 115% at 44% 0, #4585be 0%, #37769f 28%, #28608c 45%, #1d4373 72%, #152e61 100%);
    background-color: #152e61;
    font-family: Roboto, "Open Sans", sans-serif;
    font-size: 8px;
    color: #444;
}

button,
input,
select {
    font: inherit;
    color: inherit;
    background: none;
    border: none;
}

ul,
ol {
    list-style: none;
}

svg {
    display: block;
    flex: none;
    width: 12px;
    height: 12px;
}

.sprite {
    position: absolute;
    width: 0;
    height: 0;
}

.tiny {
    width: 8px;
    height: 8px;
}

/* Banner */
.banner {
    width: 560px;
    height: 92px;
    margin-top: 4px;
    padding: 13px 31px 0;
    background: #00a99d;
    clip-path: polygon(0 0, 100% 0, 86% 100%, 0 100%);
    color: #f2fffd;
    white-space: nowrap;
}

.series {
    font-family: Lato, sans-serif;
    font-size: 25px;
    line-height: 28px;
    letter-spacing: 11px;
}

.title {
    font-family: "Noto Sans CJK JP", sans-serif;
    font-size: 32px;
    font-weight: 500;
    line-height: 42px;
    letter-spacing: 8px;
}

/* Stage */
.stage {
    flex: 1;
    display: grid;
    grid-template-columns: 305px 1fr;
    padding: 4px 8px 7px 0;
}

.guide {
    padding-left: 19px;
    color: #f4fbff;
}

.steps {
    font-family: "Noto Sans CJK JP", sans-serif;
    font-size: 20px;
    line-height: 26px;
}

.steps li {
    display: flex;
    align-items: center;
    gap: 8px;
    width: 210px;
    min-height: 56px;
}

.num {
    flex: none;
    width: 42px;
    height: 42px;
    border: 4px solid #000;
    border-radius: 50%;
    background: #fffff6;
    color: #000;
    font-size: 30px;
    line-height: 32px;
    text-align: center;
}

.callout {
    width: 192px;
    margin: 211px 0 0 13px;
    padding: 1px 6px 5px;
    background: #98195f;
    font-family: Lato, sans-serif;
    font-size: 22px;
    line-height: 27px;
    letter-spacing: 3px;
}

/* Application window */
.revit {
    display: flex;
    flex-direction: column;
    min-width: 0;
    background: #cbcbcb;
    border-left: 1px solid #dde3e8;
    white-space: nowrap;
}

.titlebar {
    display: flex;
    align-items: center;
    height: 18px;
}

.qat,
.account {
    display: flex;
    align-items: center;
}

.tool {
    display: flex;
    justify-content: center;
    width: 15px;
}

.gap {
    width: 4px;
    height: 12px;
}

.line {
    border-left: 1px solid #b4b4b4;
}

.doc-title {
    margin-left: 9px;
    line-height: 14px;
    align-self: flex-start;
}

.account {
    margin-left: 9px;
}

.win-buttons {
    display: flex;
    gap: 7px;
    margin-left: auto;
    padding-right: 4px;
}

.tabs {
    display: flex;
    align-items: center;
    gap: 1px;
    height: 14px;
    line-height: 14px;
}

.tabs a {
    padding: 0 6px;
    color: #444;
    text-decoration: none;
}

.tabs .file {
    padding: 0 8px;
    background: #1e74b8;
    color: #fff;
}

.tabs .active {
    background: #e3efd6;
    color: #222;
}

.panel-toggle {
    width: 12px;
    height: 8px;
    margin-left: 12px;
}

/* Ribbon */
.ribbon {
    display: flex;
    height: 60px;
    background: #e3efd6;
    border-bottom: 1px solid #d3dccb;
}

.group {
    display: flex;
    flex-direction: column;
    align-items: center;
    background: #efefef;
}

.tools {
    flex: 1;
    display: flex;
    justify-content: center;
    padding-top: 1px;
}

.label {
    display: flex;
    align-items: center;
    line-height: 12px;
}

.tools button {
    display: flex;
    align-items: center;
    justify-content: center;
}

.ic20 {
    width: 20px;
    height: 20px;
}

.tools .big {
    flex-direction: column;
    justify-content: flex-start;
    line-height: 12px;
    padding-top: 4px;
}

.tools .off {
    color: #bbb;
    margin-right: 5px;
}

.stack {
    flex-direction: column;
    justify-content: flex-start;
    gap: 1px;
}

.stack button {
    width: 24px;
    height: 22px;
}

.stack .on {
    background: #cfe3f7;
    outline: 1px solid #6a9fd4;
}

.small-col {
    display: flex;
    flex-direction: column;
    padding-top: 1px;
}

.small-col button {
    height: 15px;
    width: 16px;
}

.small-col.named {
    width: 46px;
}

.small-col.named button {
    width: auto;
    justify-content: flex-start;
    gap: 2px;
}

.small-col.carets {
    gap: 7px;
    padding-top: 4px;
}

.grid-big {
    display: grid;
    grid-template-columns: repeat(4, 25px);
    grid-auto-rows: 23px;
}

.grid-big.two {
    grid-template-columns: repeat(2, 24px);
}

.g-select { width: 37px; }
.g-props { width: 44px; }
.g-clip { width: 52px; }
.g-geo { width: 86px; }
.g-modify { width: 154px; }
.g-view { width: 40px; }
.g-measure { width: 36px; }
.g-create { width: 54px; }
.g-tag { width: 69px; }

.g-measure button {
    width: 30px;
}

.tools .tag-on {
    flex-direction: column;
    width: 41px;
    height: 46px;
    background: #bcdcf8;
    border: 1px solid #6a9fd4;
    line-height: 10px;
    white-space: normal;
}

.tag-on svg {
    width: 28px;
    height: 22px;
}

/* Options bar */
.options {
    display: flex;
    align-items: center;
    height: 17px;
    padding-left: 5px;
    background: #e3efd6;
}

.context {
    width: 85px;
    border-right: 1px solid #cfd9c6;
}

.drop {
    display: flex;
    align-items: center;
    background: #e6e6e6;
}

.drop select {
    flex: 1;
    min-width: 0;
    appearance: none;
}

.drop i {
    font-size: 6px;
}

.orient {
    width: 62px;
    height: 15px;
    padding-left: 4px;
    gap: 2px;
}

.options input {
    appearance: none;
    width: 8px;
    height: 8px;
    margin: 0 2px 0 4px;
    border: 1px solid #555;
    background: #fff;
}

.area-label {
    margin-left: 8px;
}

.drop.area {
    width: 63px;
    height: 15px;
    margin-left: 2px;
}

/* Workspace */
.workspace {
    flex: 1;
    display: grid;
    grid-template-columns: 192px 1fr;
    column-gap: 4px;
    min-height: 0;
}

.docks {
    display: flex;
    flex-direction: column;
    background: #efefef;
    min-width: 0;
}

.dock-title {
    display: flex;
    align-items: center;
    justify-content: space-between;
    height: 14px;
    padding: 0 2px;
    font-size: 8px;
    font-weight: normal;
    border-bottom: 1px solid #c4c4c4;
}

.type {
    display: flex;
    align-items: center;
    height: 45px;
    padding: 2px 0 2px 3px;
    border-bottom: 1px solid #a8a8a8;
}

.thumb {
    width: 41px;
    height: 41px;
    margin-right: 3px;
    border: 1px solid #ddd;
}

.type .tiny {
    margin-left: auto;
}

.filter {
    display: flex;
    align-items: center;
    height: 13px;
    padding-left: 1px;
    background: #e6e6e6;
}

.filter > .tiny {
    margin-left: auto;
}

.filter button {
    display: flex;
    align-items: center;
    margin-left: 2px;
    padding: 0 2px;
    background: #f2f2f2;
}

.scroller {
    display: grid;
    grid-template-columns: 1fr 11px;
    background: #fff;
    overflow: hidden;
}

.params {
    border-collapse: collapse;
    table-layout: fixed;
    width: 100%;
    align-self: start;
}

.p-name {
    width: 87px;
}

.p-btn {
    width: 7px;
}

.params tr {
    height: 12px;
    line-height: 11px;
}

.params .head {
    height: 10px;
    line-height: 10px;
}

.params th {
    padding-left: 1px;
    background: #dcdcdc;
    font-weight: normal;
    text-align: left;
}

.params th i {
    float: right;
    font-style: normal;
    font-size: 6px;
}

.params td {
    padding-left: 1px;
    border: 1px solid #e4e4e4;
    border-top: none;
}

.params td:first-child {
    padding-left: 5px;
}

.params input {
    display: block;
    width: 100%;
    height: 10px;
    border: 1px solid #777;
}

.dim {
    color: #8a8a8a;
}

.vbar {
    display: flex;
    flex-direction: column;
    align-items: center;
    background: #f0f0f0;
    padding: 2px 0;
}

.vbar .thumb-bar {
    width: 10px;
    background: #c8c8c8;
}

.vbar .end {
    margin-top: auto;
}

.short .thumb-bar {
    height: 26px;
    margin-top: 2px;
}

.long .thumb-bar {
    flex: 1;
    margin-bottom: 11px;
}

.prop-foot {
    display: flex;
    justify-content: space-between;
    align-items: center;
    height: 17px;
    padding-left: 1px;
}

.prop-foot a {
    color: #2a78b8;
}

.prop-foot button {
    width: 46px;
    height: 14px;
    background: #d0d0d0;
    color: #9a9a9a;
}

.properties .scroller {
    height: 151px;
}

.browser {
    flex: 1;
    display: flex;
    flex-direction: column;
    min-height: 0;
}

.browser .scroller {
    flex: 1;
    min-height: 0;
}

.tree {
    height: 225px;
    overflow: hidden;
    line-height: 10px;
    padding: 1px 0 0 2px;
}

.tree svg {
    display: inline-block;
    vertical-align: top;
    margin-top: 1px;
}

.tree .node {
    width: 10px;
    height: 9px;
    margin: 1px 2px 0 3px;
}

.tree ul {
    padding-left: 13px;
}

.tree ul .tiny {
    margin-right: 4px;
}

.tree .flat {
    padding-left: 25px;
}

.tree .leaf {
    padding-left: 25px;
    color: #000;
}

.tree mark {
    background: #e2e2e2;
    color: inherit;
}

/* Views */
.views {
    display: flex;
    flex-direction: column;
    min-width: 0;
    background: #d0d0d0;
}

.view-tabs {
    display: flex;
    align-items: center;
    height: 15px;
    background: #cbcbcb;
}

.view-tab {
    display: flex;
    align-items: center;
    gap: 4px;
    height: 100%;
    padding: 0 2px;
    background: #ececec;
}

.view-tab .node {
    width: 12px;
    height: 10px;
}

.front {
    width: 79px;
    background: #fff;
}

.view-tab button,
.more {
    margin-left: auto;
}

.second {
    height: 14px;
}

.second .view-tab {
    width: 152px;
}

.second .node {
    width: 10px;
}

.plan-row {
    display: flex;
    height: 212px;
}

.plan-wrap {
    position: relative;
    flex: 1;
    min-width: 0;
}

.plan {
    width: 100%;
    height: 100%;
    background: #fff;
}

/* Navigation bar floats over the drawing */
.navbar {
    position: absolute;
    top: 1px;
    right: 0;
    width: 20px;
    height: 68px;
    background: #ececec;
    border: 1px solid #d8d8d8;
}

.navbar svg {
    width: 18px;
    height: 66px;
}

.plan-bar {
    width: 11px;
}

.plan-bar .thumb-bar {
    height: 11px;
    margin-top: 91px;
}

.view-controls {
    display: flex;
    align-items: center;
    gap: 1px;
    height: 13px;
    margin-bottom: 1px;
    background: #f0f0f0;
}

.scale {
    width: 49px;
    padding-left: 14px;
}

.view-controls svg:not(.tiny) {
    height: 10px;
}

.hbar {
    flex: 1;
    display: flex;
    justify-content: center;
}

.hbar .thumb-bar {
    width: 11px;
    height: 11px;
    background: #c8c8c8;
}

.schedule-area {
    flex: 1;
    border-top: 1px solid #e8e8e8;
}

.schedule {
    table-layout: fixed;
    border-collapse: collapse;
    width: 524px;
    background: #fff;
    font-family: "Liberation Sans", Arial, sans-serif;
    font-size: 7px;
    line-height: 9px;
    color: #222;
}

.schedule caption {
    background: #fff;
    border: 1px solid #888;
    border-bottom: none;
    font-size: 10px;
    line-height: 23px;
}

.c-a { width: 148px; }
.c-b { width: 126px; }
.c-c { width: 128px; }
.c-d { width: 61px; }
.c-e { width: 61px; }

.schedule th,
.schedule td {
    height: 10px;
    border: 1px solid #888;
    font-weight: normal;
}

.schedule .letters th {
    background: #f0f0f0;
    font-weight: bold;
}

.schedule .spacer td {
    background: #d0d0d0;
    height: 9px;
}

.schedule tbody td,
.schedule .names th {
    border-left-color: #ddd;
    border-right-color: #ddd;
}

/* Status bar */
.status {
    display: flex;
    align-items: center;
    height: 17px;
    border-top: 1px solid #f4f4f4;
    padding-right: 8px;
}

.hint {
    width: 397px;
    color: #222;
}

.workset {
    width: 128px;
    margin-right: 1px;
}

.status .drop {
    height: 11px;
    background: #efefef;
}

.status .s-ic {
    margin: 0 1px;
}

.faded {
    opacity: 0.5;
}

.option {
    width: 128px;
    color: #777;
}

.select-tools {
    display: flex;
    align-items: center;
    gap: 1px;
    margin-left: auto;
}
```
FILE: plan.js
```js
// Site plan drawing, coordinates are in plan units
const svg = document.getElementById('plan');
const NS = 'http://www.w3.org/2000/svg';

function add(tag, attrs) {
    const el = document.createElementNS(NS, tag);
    for (const key in attrs) {
        el.setAttribute(key, attrs[key]);
    }
    svg.appendChild(el);
    return el;
}

function line(d, color, width, dash) {
    add('path', { d: d, fill: 'none', stroke: color || '#666', 'stroke-width': width || 0.6, 'stroke-dasharray': dash || 'none' });
}

function fill(d, color, stroke) {
    add('path', { d: d, fill: color, stroke: stroke || 'none', 'stroke-width': 0.6 });
}

// Contours between two polylines with the same number of points
function contours(a, b, count, wobble) {
    for (let i = 0; i <= count; i++) {
        const t = i / count;
        let d = '';
        for (let j = 0; j < a.length; j++) {
            const w = wobble * Math.sin(i * 0.8 + j * 2.3);
            const x = a[j][0] + (b[j][0] - a[j][0]) * t + w;
            const y = a[j][1] + (b[j][1] - a[j][1]) * t + w * 0.6;
            d += (j ? 'L' : 'M') + x.toFixed(1) + ' ' + y.toFixed(1);
        }
        line(d, '#777', 0.6);
    }
}

// Row of parking bays
function bays(x1, y1, x2, y2, depth, count) {
    const dx = (x2 - x1) / count, dy = (y2 - y1) / count;
    const len = Math.hypot(dx, dy);
    const nx = -dy / len * depth, ny = dx / len * depth;
    let d = 'M' + x1 + ' ' + y1 + 'L' + x2 + ' ' + y2;
    for (let i = 0; i <= count; i++) {
        const x = x1 + dx * i, y = y1 + dy * i;
        d += 'M' + x + ' ' + y + 'l' + nx + ' ' + ny;
        if (i < count) {
            d += 'L' + (x + dx) + ' ' + (y + dy);
        }
    }
    line(d, '#444', 0.7);
}

// Dashed grid line with a bubble at its end
function axis(x1, y1, x2, y2, bubble) {
    line('M' + x1 + ' ' + y1 + 'L' + x2 + ' ' + y2, '#8a8a86', 0.6, '6 1.5');
    if (bubble) {
        add('circle', { cx: x2, cy: y2, r: 1.6, fill: 'none', stroke: '#666', 'stroke-width': 0.7 });
    }
}

// Ground fills
fill('M502 228L540 249 571 269 580 257 607 269 627 264 650 250 690 228Z', '#f3f3f3');
fill('M1050 228H1261V440H1050Z', '#f3f3f3');
fill('M651 228L638 245 630 260 700 300 606 390 606 400 635 440H1065L1085 405 1112 365 1103 313 1088 280 1082 245 1063 228Z', '#f5f0d0');
fill('M672 228L655 253 672 256 700 290 622 377 605 389 606 400 635 440H805L840 440 893 408 920 378 970 347 937 322 900 296 837 292 790 284 770 262 712 228Z', '#fdfbe0');
fill('M627 264L655 253Q672 252 682 267 691 282 686 301L660 335 622 377 580 390 560 340 600 270Z', '#fff');

// West contours
contours(
    [[510, 228], [535, 246], [570, 269], [594, 288], [620, 300], [645, 287], [664, 281], [668, 276]],
    [[502, 275], [528, 299], [550, 325], [566, 346], [584, 338], [604, 350], [625, 340], [655, 338]],
    12, 1
);
line('M566 344L580 340 588 343 602 357M568 347L581 342 588 346 600 357M571 349L582 345 587 349 597 356M502 280L528 302 574 349');
line('M502 228L516 236 540 249 571 269 580 257Q605 272 627 264L655 253Q672 252 682 267 691 282 686 301L660 335', '#555', 0.8);
line('M576 228L600 243Q618 252 635 245L660 232 672 228M571 269L590 282Q605 286 628 278L630 276M627 264L630 278M641 259L642 274M682 271L668 275M689 283L674 283M676 296L686 300');
// Access road loop
line('M559 332L571 357Q580 374 589 374 597 374 604 366L662 310Q674 296 672 284 669 270 655 273L630 278 600 284', '#666', 5);
line('M559 332L571 357Q580 374 589 374 597 374 604 366L662 310Q674 296 672 284 669 270 655 273L630 278 600 284', '#fff', 3.6);
line('M529 301L502 325M529 301L560 334M502 330L593 440M502 365L515 353M514 349L543 387M514 349L516 346M596 360L597 370 610 384M622 377L605 389Q606 410 635 440M660 335L622 377');
line('M640 273L652 276 651 283ZM640 273L642 290', '#555', 0.6);

// Diagonal setting-out grids
for (let i = 0; i < 13; i++) {
    axis(572 + i * 21, 440, 702 + i * 21 + (i % 3) * 5, 286 + (i % 4) * 9);
}
for (let i = 0; i < 9; i++) {
    axis(642 + i * 14, 350 - i * 14, 742 + i * 25, 446 - i * 4);
}
line('M775 335L905 440M800 330L930 440M650 345L720 300', '#999', 0.6);

// Upper hill contours
contours([[668, 228], [655, 245], [680, 250], [690, 262], [692, 285], [690, 300]], [[714, 236], [698, 240], [715, 262], [702, 270], [699, 285], [693, 304]], 7, 1.4);
line('M645 246L668 228M676 236L690 229M662 240L672 233M700 228L735 242 765 250 778 262M710 228L782 258');

// Basement car park
line('M719 242L697 300 670 335 748 405 757 409 773 407 822 348 826 332 829 318', '#333', 1.1);
line('M722 243L700 299 673 334 747 400 755 397 765 383 809 342 812 316', '#555', 0.7);
line('M719 242L735 250 765 267 767 289 837 295 903 295 950 325M721 246L733 253 731 249 722 244M766 266L738 276M725 280L705 308M726 280Q732 269 742 279L754 287 752 302', '#333', 1);
line('M738 278L766 269M742 280L756 310M705 310L735 320 690 352M740 312L700 345M712 320L724 350M760 262L738 300', '#777', 0.5);
bays(709, 312, 730, 276, 8, 9);
bays(722, 316, 743, 280, -8, 8);
bays(687, 320, 702, 304, 9, 4);
bays(694, 350, 717, 370, -10, 6);
bays(724, 368, 751, 394, -10, 7);
bays(743, 350, 775, 317, 9, 8);
bays(752, 358, 800, 312, -9, 10);
bays(758, 372, 806, 338, -11, 10);
line('M765 376L775 362 808 338 808 344 790 360M820 346L822 353 806 367 808 355ZM824 322L820 335 826 341 828 330Z', '#444', 0.8);
// Core rooms
line('M750 295H766V302H750ZM753 285H768V290H753ZM766 292H780V310H766ZM768 300H778V304H768ZM752 304H764V312H752ZM736 316H750V324H736ZM732 320H748V332H732ZM733 334H745V343H733ZM750 310H763V320H750ZM745 325H752V333H745ZM783 301H796V309H783ZM798 302H812V308H798ZM813 296H826V310H813ZM766 314H830M780 290V309H813V314M742 330H752M738 338H746V344H738Z', '#222', 0.9);
line('M770 296V308M774 296V308M755 296V301M759 296V301M740 321V331M744 321V331M808 315V320M818 310L834 296 828 322', '#333', 0.8);
line('M835 300H872M843 302L836 320 841 322 850 311 868 309 874 303 852 302ZM832 294H856', '#444', 0.8);
line('M843 316L848 309 870 303', '#333', 2, '2 1');

// North road and retaining walls
line('M772 266L790 283H900L977 327 997 325 1013 303M769 270L778 285 788 289H837L905 290 975 332 1000 329 1018 304', '#555', 0.7);
line('M837 295H903L937 314 967 334 1000 350 1013 357M872 303L900 304 937 322 967 343 1000 357 1013 395', '#444', 0.8);
line('M875 307L898 307 935 325 963 345 971 349', '#555', 0.6);
line('M935 314L962 330 984 346', '#333', 2, '3 1');
line('M900 285V295M977 327L974 319M997 325L990 318M832 293H854', '#555', 0.8);

// Top building
for (let i = 0; i < 13; i++) {
    axis(784 + i * 10 + (i % 3) * 3, 228, 784 + i * 10 + (i % 3) * 3, 272 + (i % 4) * 5);
}
for (let i = 0; i < 6; i++) {
    axis(905, 241 + i * 7, 780, 241 + i * 7, i % 2 === 0);
}
fill('M810 245H854V252H867V270H854V273H810Z', '#fbf8dc');
line('M810 245H854V252H867V270H854V273H810ZM812 247H835V271H812ZM835 247V271H850', '#444', 1.1);
line('M819 247V251H824V247M829 247V252H834M819 258H832V270M837 250H842V256H838V262H843V270M845 248V260H850V250M848 262H853V268M855 254H864V268H855ZM859 254V262H864M838 270H853M840 247V253M853 250V272', '#333', 0.9);
line('M838 270H853', '#222', 2.5, '1 .5');
line('M853 273V285M858 273V285');

// North-east building
for (let i = 0; i < 10; i++) {
    axis(930 + i * 9, 300 + i * 4, 966 + i * 8 - (i > 4 ? 0 : 3), 228 + i * 4, true);
}
for (let i = 0; i < 9; i++) {
    axis(1025 - i * 2, 282 + i * 5, 920 - i * 3, 228 + i * 9, i < 4);
}
fill('M926 281L944 256 1004 292 988 319Z', '#fbf8dc');
line('M926 281L944 256 1004 292 988 319ZM929 280L944 259 1000 293 987 315Z', '#444', 1);
add('g', { transform: 'translate(944 257) rotate(31)', stroke: '#333', 'stroke-width': 0.9, fill: 'none' }).innerHTML =
    '<path d="M2 3H14V14H3ZM14 3V28M3 14V28M6 16H12V26M17 2H24V10H17ZM17 12H25V20H17ZM18 22H34V28H18ZM26 3H30V8H26ZM26 10H34V18H26ZM32 2V9H38V2M37 4H49V14H37ZM37 16H48V28M50 3V28M53 5H65V16H53ZM53 18H60V27H53ZM62 18V28M40 18V26M20 5H22V8H20ZM28 12H32V15H28M55 20H58V24H55Z"/>';

// South-east building and garden edge
line('M1013 303L1040 322 1072 336 1081 358 1062 416 1040 423 1008 412 1042 400M1040 322L1046 342 1030 345M1013 303L1018 315 1000 330M1020 336L1046 330 1058 337 1040 330');
line('M958 228L1002 248 1011 275 1006 295M945 228L1003 262M920 290L962 232', '#777');
fill('M1003 354L1023 345 1027 354 1037 350 1042 384 1013 396Z', '#fbf8dc');
line('M1003 354L1023 345 1027 354 1037 350 1042 368 1040 384 1013 396ZM1006 356L1022 349 1026 360 1035 355M1010 372L1025 366 1030 386 1015 391ZM1027 356L1031 372 1042 368', '#444', 1);
add('g', { transform: 'translate(1004 355) rotate(-17)', stroke: '#333', 'stroke-width': 0.9, fill: 'none' }).innerHTML =
    '<path d="M2 2H10V8H2ZM12 1H18V10H12ZM3 11H20V22H3ZM6 13V20M9 13V20M12 13V22M22 4H32V18H22ZM25 7H29V12H25ZM4 25H14V36H4ZM16 24H26V34H16ZM18 27H23V31H18ZM22 20H32V24M7 28H11V33H7Z"/>';
[[1018, 345, 1052, 426], [1032, 345, 1062, 422], [1041, 345, 1070, 419]].forEach(function (a) {
    axis(a[0], a[1], a[2], a[3], true);
});
axis(1050, 335, 1090, 423, true);
axis(1020, 358, 992, 368, true);
axis(1024, 378, 998, 383, true);
axis(1040, 388, 1002, 396, true);
axis(1042, 380, 1004, 402, true);
axis(1030, 350, 1056, 317, true);
axis(1016, 392, 1036, 440);

// South-east slope contours
contours(
    [[873, 325], [879, 342], [868, 366], [860, 380], [836, 410], [803, 440]],
    [[972, 346], [962, 357], [938, 366], [905, 395], [880, 418], [842, 440]],
    10, 1.2
);
contours([[828, 315], [850, 320], [868, 324], [880, 333]], [[834, 308], [860, 313], [875, 320], [882, 331]], 4, 0.6);
line('M880 308L893 322 890 335 905 340 917 350 908 362 880 376M939 331L936 345 920 356');
line('M858 422L893 410 894 423 840 440M858 422L860 428 892 417M868 420L866 428 880 423 884 413M840 430L858 424M890 412L885 426M825 438L850 428', '#444', 0.8);
line('M945 440L950 432 958 420 973 415 983 420 996 440M893 407L932 440M870 385L922 440', '#777');

// Neighbouring lots to the east
line('M1085 228L1086 262 1090 280Q1100 315 1118 318L1131 318 1132 326 1141 328 1158 275 1165 228M1119 228Q1130 235 1140 231L1142 228', '#555', 0.8);
line('M1181 288L1261 347M1179 333L1261 392', '#fff', 5);
fill('M1211 228Q1235 252 1261 270V228Z', '#fff');
line('M1211 228Q1235 252 1261 270', '#666');
fill('M1188 362L1224 376 1249 396 1247 419 1188 416 1172 400 1183 380 1187 370Z', '#fff', '#555');
line('M1187 370L1214 381Q1222 385 1220 392 1217 397 1210 395L1182 382');
fill('M1188 417L1247 419 1261 420V440H1197Z', '#f3f3f3');
line('M1090 440L1096 432 1100 432 1106 423 1109 423 1135 390 1149 400 1157 402 1160 396 1165 396 1182 411 1188 417 1197 439 1214 434 1261 437M1197 439L1220 437 1261 438M1188 417L1247 419', '#555', 0.8);

// Survey marks
[[1084, 245], [1089, 289], [1101, 312], [1114, 364], [1080, 412], [712, 374], [740, 250]].forEach(function (p) {
    add('circle', { cx: p[0], cy: p[1], r: 0.9, fill: '#555' });
});
const tag = add('text', { x: 613, y: 377, 'font-size': 7, 'font-style': 'italic', fill: '#4a62a0' });
tag.textContent = 'D';
// Crosshair cursor
line('M834.500 355.500h6M837.500 352.500v6', '#000', 1.5);
```
